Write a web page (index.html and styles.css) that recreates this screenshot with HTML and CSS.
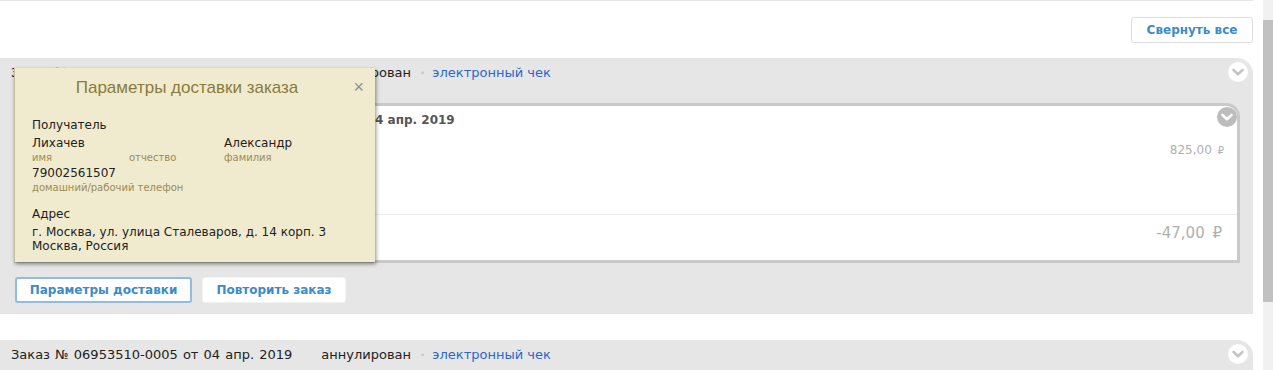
FILE: index.html
```html
<!DOCTYPE html>
<html lang="ru">
<head>
    <meta charset="UTF-8">
    <title>Мои заказы</title>
    <link rel="stylesheet" href="styles.css">
</head>
<body>

<div class="screen">
    <div class="page">
        <div class="toolbar">
            <button class="btn">Свернуть все</button>
        </div>

        <div class="order">
            <div class="order-head">
                <span class="order-num">Заказ № 06953510-0006 от 04 апр. 2019</span>
                <span class="order-status">аннулирован</span>
                <span class="dot">•</span>
                <a class="check-link" href="#">электронный чек</a>
                <span class="toggle toggle-light">
                    <svg width="20" height="20" viewBox="0 0 20 20"><circle cx="10" cy="10" r="10" fill="#fff"/><path d="M5.5 8 L10 12.2 L14.5 8" fill="none" stroke="#c4c4c4" stroke-width="2.6" stroke-linecap="round" stroke-linejoin="round"/></svg>
                </span>
            </div>

            <div class="shipment">
                <span class="toggle toggle-dark">
                    <svg width="20" height="20" viewBox="0 0 20 20"><circle cx="10" cy="10" r="10" fill="#bcbcbc"/><path d="M5.5 8 L10 12.2 L14.5 8" fill="none" stroke="#fff" stroke-width="2.6" stroke-linecap="round" stroke-linejoin="round"/></svg>
                </span>
                <div class="ship-row">
                    <div class="ship-title">Отправление № 06953510-0006-01 от 04 апр. 2019</div>
                    <div class="ship-sum">825,00 <span class="rub">₽</span></div>
                </div>
                <div class="ship-row ship-row-total">
                    <div class="ship-sum ship-sum-big">-47,00 <span class="rub">₽</span></div>
                </div>
            </div>

            <div class="order-actions">
                <button class="btn btn-active">Параметры доставки</button>
                <button class="btn btn-plain">Повторить заказ</button>
            </div>

            <div class="popup">
                <div class="popup-title">Параметры доставки заказа <span class="popup-close">×</span></div>
                <div class="popup-body">
                    <div class="p-caption">Получатель</div>
                    <div class="p-grid">
                        <div class="p-cell"><div class="p-val">Лихачев</div><div class="p-lbl">имя</div></div>
                        <div class="p-cell"><div class="p-val">&nbsp;</div><div class="p-lbl">отчество</div></div>
                        <div class="p-cell"><div class="p-val">Александр</div><div class="p-lbl">фамилия</div></div>
                    </div>
                    <div class="p-val p-phone">79002561507</div>
                    <div class="p-lbl">домашний/рабочий телефон</div>
                    <div class="p-caption p-caption-addr">Адрес</div>
                    <div class="p-addr">г. Москва, ул. улица Сталеваров, д. 14 корп. 3</div>
                    <div class="p-addr">Москва, Россия</div>
                </div>
            </div>
        </div>

        <div class="order">
            <div class="order-head">
                <span class="order-num">Заказ № 06953510-0005 от 04 апр. 2019</span>
                <span class="order-status">аннулирован</span>
                <span class="dot">•</span>
                <a class="check-link" href="#">электронный чек</a>
                <span class="toggle toggle-light">
                    <svg width="20" height="20" viewBox="0 0 20 20"><circle cx="10" cy="10" r="10" fill="#fff"/><path d="M5.5 8 L10 12.2 L14.5 8" fill="none" stroke="#c4c4c4" stroke-width="2.6" stroke-linecap="round" stroke-linejoin="round"/></svg>
                </span>
            </div>
            <div class="order-rest"></div>
        </div>
    </div>

    <div class="scrollbar"><div class="thumb"></div></div>
</div>

</body>
</html>
```

FILE: styles.css
```css
body {
    margin: 0;
    background: #fff;
    font-family: 'DejaVu Sans', Verdana, sans-serif;
    font-size: 12px;
    color: #222;
    overflow: hidden;
}

.screen {
    display: flex;
    height: 370px;
}
.page {
    width: 1253px;
    border-top: 1px solid #e6e6e6;
}
.scrollbar {
    width: 10px;
    margin-left: 10px;
    background: #f1f1f1;
}
.thumb {
    margin-top: 20px;
    height: 282px;
    background: #c1c1c1;
}

.toolbar {
    display: flex;
    justify-content: flex-end;
    padding: 16px 0 15px;
}

.btn {
    font-family: 'DejaVu Sans', Verdana, sans-serif;
    font-size: 12px;
    font-weight: bold;
    color: #3b8bcb;
    background: #fff;
    border: 1px solid #dedede;
    border-radius: 3px;
    height: 26px;
    padding: 0 10px;
    cursor: pointer;
}
.toolbar .btn { width: 122px; }

.order {
    position: relative;
    background: #e6e6e6;
    border-top-right-radius: 16px;
    margin-bottom: 26px;
}
.order-head {
    position: relative;
    display: flex;
    align-items: center;
    height: 30px;
    padding: 0 0 15px 11px;
    font-size: 13px;
    line-height: 30px;
}
.order-num { word-spacing: 1px; }
.order-status { margin-left: 29px; }
.dot { color: #c8c8c8; font-size: 9px; margin: 0 7px 0 9px; }
.check-link { color: #2a68cc; text-decoration: none; }

.toggle { position: absolute; line-height: 0; }
.toggle-light { right: 5px; top: 4px; }
.toggle-dark { right: 0; top: 1px; }

.shipment {
    position: relative;
    background: #fff;
    border: 3px solid #c9c9c9;
    border-top-right-radius: 14px;
    margin: 0 13px 0 14px;
}
.ship-row {
    display: flex;
    justify-content: space-between;
    height: 108px;
    border-bottom: 1px solid #ececec;
}
.ship-title {
    font-weight: bold;
    color: #555;
    padding: 5px 0 0 85px;
    line-height: 18px;
}
.ship-sum {
    color: #b0b0b0;
    padding: 35px 13px 0 0;
    line-height: 18px;
}
.rub { font-size: 10px; margin-left: 2px; }
.ship-row-total {
    height: 45px;
    justify-content: flex-end;
    border-bottom: none;
}
.ship-sum-big {
    font-size: 15px;
    padding: 9px 15px 0 0;
}
.ship-sum-big .rub { font-size: 15px; margin-left: 3px; }

.order-actions {
    display: flex;
    gap: 10px;
    padding: 14px 0 11px 15px;
}
.btn-active {
    width: 177px;
    border: 2px solid #8fbbe6;
}
.btn-plain {
    width: 144px;
    border-color: #f2f2f2;
}

.order-rest { height: 20px; }

.popup {
    position: absolute;
    left: 14px;
    top: 10px;
    width: 360px;
    height: 194px;
    background: #f0ebcf;
    box-shadow: 1px 2px 4px rgba(0, 0, 0, 0.45);
    border-left: 1px solid #c6c0a2;
}
.popup-title {
    position: relative;
    text-align: center;
    font-family: 'Liberation Sans', Arial, sans-serif;
    font-size: 17px;
    color: #8a7b3c;
    padding: 10px 16px 0 0;
    line-height: 19px;
}
.popup-close {
    position: absolute;
    right: 11px;
    top: 10px;
    color: #8f8f8f;
    font-size: 18px;
}
.popup-body {
    padding: 19px 0 0 17px;
}
.p-caption { line-height: 18px; margin-bottom: 1px; }
.p-caption-addr { margin-top: 11px; margin-bottom: 2px; }
.p-grid {
    display: grid;
    grid-template-columns: 97px 95px 1fr;
}
.p-val { line-height: 16px; }
.p-phone { margin-top: 1px; }
.p-lbl {
    font-size: 10px;
    color: #9d8a55;
    line-height: 13px;
}
.p-addr { line-height: 14px; }
```
